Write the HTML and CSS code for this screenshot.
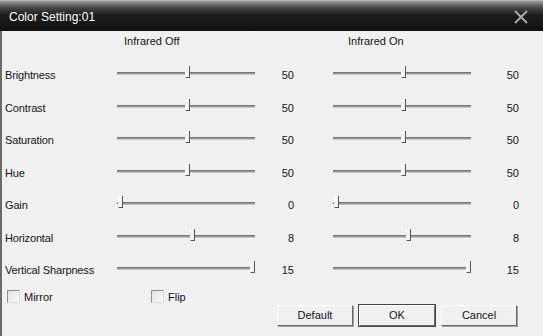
FILE: index.html
```html
<!DOCTYPE html>
<html lang="en">
<head>
    <meta charset="UTF-8">
    <title>Color Setting</title>
    <link rel="stylesheet" href="styles.css">
</head>
<body>
    <div class="dialog">
        <!-- Title bar -->
        <div class="titlebar">
            <span class="title">Color Setting:01</span>
            <svg class="close" width="14" height="14" viewBox="0 0 14 14">
                <path d="M1 1 L13 13 M13 1 L1 13" stroke="#a8a8a8" stroke-width="2"/>
            </svg>
        </div>

        <div class="content">
            <div class="grid">
                <div></div>
                <div class="col-head off">Infrared Off</div>
                <div></div>
                <div></div>
                <div class="col-head on">Infrared On</div>
                <div></div>

                <div class="label">Brightness</div>
                <div class="slider"><span class="thumb" style="left: 51%"></span></div>
                <div class="value">50</div>
                <div></div>
                <div class="slider"><span class="thumb" style="left: 51%"></span></div>
                <div class="value">50</div>

                <div class="label">Contrast</div>
                <div class="slider"><span class="thumb" style="left: 51%"></span></div>
                <div class="value">50</div>
                <div></div>
                <div class="slider"><span class="thumb" style="left: 51%"></span></div>
                <div class="value">50</div>

                <div class="label">Saturation</div>
                <div class="slider"><span class="thumb" style="left: 51%"></span></div>
                <div class="value">50</div>
                <div></div>
                <div class="slider"><span class="thumb" style="left: 51%"></span></div>
                <div class="value">50</div>

                <div class="label">Hue</div>
                <div class="slider"><span class="thumb" style="left: 51%"></span></div>
                <div class="value">50</div>
                <div></div>
                <div class="slider"><span class="thumb" style="left: 51%"></span></div>
                <div class="value">50</div>

                <div class="label">Gain</div>
                <div class="slider"><span class="thumb" style="left: 2%"></span></div>
                <div class="value">0</div>
                <div></div>
                <div class="slider"><span class="thumb" style="left: 2%"></span></div>
                <div class="value">0</div>

                <div class="label">Horizontal</div>
                <div class="slider"><span class="thumb" style="left: 54%"></span></div>
                <div class="value">8</div>
                <div></div>
                <div class="slider"><span class="thumb" style="left: 54%"></span></div>
                <div class="value">8</div>

                <div class="label">Vertical Sharpness</div>
                <div class="slider"><span class="thumb" style="left: 98%"></span></div>
                <div class="value">15</div>
                <div></div>
                <div class="slider"><span class="thumb" style="left: 98%"></span></div>
                <div class="value">15</div>
            </div>

            <!-- Bottom row -->
            <div class="footer">
                <div class="checks">
                    <label class="check mirror"><span class="box"></span>Mirror</label>
                    <label class="check"><span class="box"></span>Flip</label>
                </div>
                <div class="buttons">
                    <button class="btn">Default</button>
                    <button class="btn primary">OK</button>
                    <button class="btn">Cancel</button>
                </div>
            </div>
        </div>
    </div>
</body>
</html>
```

FILE: styles.css
```css
/* Page */
body {
    margin: 0;
    font-family: 'Liberation Sans', Arial, sans-serif;
    font-size: 11px;
    color: #141414;
    background: #f0f0f0;
}

.dialog {
    width: 543px;
    height: 336px;
    display: flex;
    flex-direction: column;
    overflow: hidden;
}

/* Title bar */
.titlebar {
    height: 31px;
    flex-shrink: 0;
    display: flex;
    align-items: center;
    justify-content: space-between;
    padding: 0 15px 0 9px;
    background: linear-gradient(#c4c4c4 0, #8a8a8a 2px, #444 8px, #1d1d1d 15px, #111 100%);
    box-sizing: border-box;
}

.title {
    color: #fff;
    font-size: 12px;
    padding-top: 3px;
}

.close {
    margin-top: 3px;
}

/* Main area */
.content {
    flex: 1;
    border-left: 2px solid #6a6a6a;
    padding-left: 3px;
    display: flex;
    flex-direction: column;
}

.grid {
    display: grid;
    grid-template-columns: 112px 138px 39px 39px 138px 48px;
    grid-template-rows: 28px repeat(7, 32.5px);
    align-items: center;
}

.col-head {
    align-self: start;
    padding-top: 4px;
    white-space: nowrap;
}

.col-head.off {
    padding-left: 7px;
}

.col-head.on {
    padding-left: 15px;
}

.label {
    white-space: nowrap;
    letter-spacing: -0.15px;
}

.value {
    text-align: right;
}

/* Trackbar */
.slider {
    position: relative;
    height: 3px;
    margin: 0 0 3px 0;
    border-top: 1px solid #777;
    border-bottom: 1px solid #c4c4c4;
    background: #999;
    box-sizing: border-box;
}

.thumb {
    position: absolute;
    top: -7px;
    width: 3px;
    height: 11px;
    margin-left: -2px;
    background: #f2f2f2;
    border-left: 1px solid #fff;
    border-right: 1px solid #555;
    border-bottom: 1px solid #555;
}

/* Footer */
.footer {
    display: flex;
    justify-content: space-between;
    padding-top: 2px;
}

.checks {
    display: flex;
    padding-left: 2px;
}

.check {
    display: flex;
    align-items: center;
    gap: 4px;
    height: 16px;
}

.check.mirror {
    width: 144px;
}

.box {
    width: 11px;
    height: 11px;
    border: 1px solid #8f8f8f;
    border-right-color: #d8d8d8;
    border-bottom-color: #d8d8d8;
    background: linear-gradient(135deg, #e4e4e4, #fafafa);
}

.buttons {
    display: flex;
    gap: 6px;
    margin-top: 16px;
    margin-right: 26px;
}

.btn {
    width: 76px;
    height: 21px;
    padding: 0;
    font-family: inherit;
    font-size: 11px;
    color: #141414;
    background: #f0f0f0;
    border: 1px solid;
    border-color: #fff #6a6a6a #6a6a6a #fff;
    box-shadow: 1px 1px 0 #a0a0a0;
}

.btn.primary {
    outline: 1px solid #444;
}
```
